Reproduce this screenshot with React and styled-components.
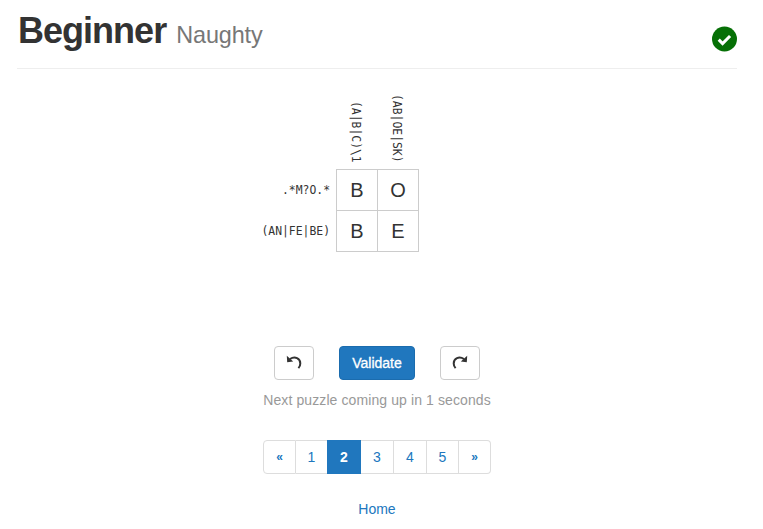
import React from "react";
import styled, { createGlobalStyle } from "styled-components";

const GlobalStyle = createGlobalStyle`
  * { box-sizing: border-box; }
  body {
    margin: 0;
    background: #fff;
    color: #333;
    font: 14px/20px "Liberation Sans", Arial, sans-serif;
    overflow: hidden;
  }
`;

const Page = styled.main`
  display: flex;
  flex-direction: column;
  align-items: center;
  width: 720px;
  height: 529px;
  margin-left: 17px;
`;

const Header = styled.header`
  display: flex;
  justify-content: space-between;
  align-items: flex-start;
  width: 100%;
  height: 69px;
  border-bottom: 1px solid #eee;
`;

const Title = styled.h1`
  display: flex;
  align-items: baseline;
  gap: 10px;
  margin: 11px 0 0 1px;
  font-size: 36px;
  line-height: 40px;
  font-weight: 700;
  letter-spacing: -0.98px;
`;

const Subtitle = styled.small`
  font-size: 23.4px;
  line-height: 1;
  font-weight: 400;
  letter-spacing: -0.1px;
  color: #777;
`;

const Solved = styled.svg`
  width: 25px;
  height: 26px;
  margin-top: 26px;
`;

const Board = styled.section`
  display: grid;
  grid-template-columns: 319px 41px 42px;
  grid-template-rows: 100px 41px 42px;
  width: 100%;
`;

const clueFont = `
  font-family: "DejaVu Sans Mono", monospace;
  font-size: 11.4px;
  white-space: pre;
`;

const Corner = styled.div`
  grid-row: 1;
  grid-column: 1;
`;

const RowClue = styled.div`
  ${clueFont}
  grid-column: 1;
  line-height: 42px;
  text-align: right;
  padding-right: 6px;
`;

const ColumnClue = styled.div`
  ${clueFont}
  display: flex;
  justify-content: flex-end;
  align-items: center;
  writing-mode: vertical-rl;
  line-height: 38px;
  padding-bottom: 6px;
  padding-right: 2px;
`;

const Cell = styled.div`
  display: flex;
  align-items: center;
  justify-content: center;
  font-size: 20px;
  border: solid #ccc;
  border-width: 1px ${(p) => (p.$last ? "1px" : "0")} ${(p) => (p.$bottom ? "1px" : "0")} 1px;
`;

const Controls = styled.div`
  display: flex;
  gap: 25px;
  margin-top: 94px;
`;

const Button = styled.button`
  display: flex;
  align-items: center;
  justify-content: center;
  width: ${(p) => (p.$primary ? "76px" : "40px")};
  height: 34px;
  padding: 0;
  border: 1px solid ${(p) => (p.$primary ? "#1b6cae" : "#ccc")};
  border-radius: 4px;
  background: ${(p) => (p.$primary ? "#2077be" : "#fff")};
  color: ${(p) => (p.$primary ? "#fff" : "#333")};
  font: 14px/20px "Liberation Sans", Arial, sans-serif;
  letter-spacing: 0;
  -webkit-text-stroke: ${(p) => (p.$primary ? "0.3px #fff" : "0")};
`;

const Arrow = styled.svg`
  width: 16px;
  height: 16px;
  transform: ${(p) => (p.$flip ? "scaleX(-1)" : "none")};
`;

const Notice = styled.p`
  margin: 10px 0 0;
  color: #999;
  letter-spacing: 0.1px;
  white-space: nowrap;
`;

const Pagination = styled.nav`
  display: flex;
  width: 228px;
  height: 34px;
  margin-top: 30px;
`;

const PageLink = styled.a`
  display: flex;
  align-items: center;
  justify-content: center;
  width: ${(p) => p.$width || 33}px;
  border: 1px solid ${(p) => (p.$active ? "#2077be" : "#ddd")};
  border-left-width: ${(p) => (p.$first || p.$active ? "1px" : "0")};
  border-right-width: ${(p) => (p.$beforeActive ? "0" : "1px")};
  border-radius: ${(p) => (p.$first ? "4px 0 0 4px" : p.$last ? "0 4px 4px 0" : "0")};
  background: ${(p) => (p.$active ? "#2077be" : "#fff")};
  color: ${(p) => (p.$active ? "#fff" : "#2077be")};
  font-size: ${(p) => (p.$first || p.$last ? "12px" : "14px")};
  font-weight: ${(p) => (p.$active || p.$first || p.$last ? 700 : 400)};
  text-decoration: none;
`;

const HomeLink = styled.a`
  margin-top: 25px;
  color: #2077be;
  text-decoration: none;
`;

function TurnArrow({ flip }) {
  return (
    <Arrow viewBox="0 0 16 16" $flip={flip}>
      <path d="M4 4C9 .8 14.3 3.5 14.3 8.4c0 1.9-.7 3.4-1.9 4.8" fill="none" stroke="#333" strokeWidth="2" />
      <path d="M.8 .8L1.2 7.2l6-.8z" fill="#333" />
    </Arrow>
  );
}

export default function App() {
  return (
    <>
      <GlobalStyle />
      <Page>
        <Header>
          <Title>Beginner <Subtitle>Naughty</Subtitle></Title>
          <Solved viewBox="0 0 26 26" aria-label="Solved">
            <circle cx="13" cy="13" r="13" fill="#067006" />
            <path d="M7 13.7l4 4 7.8-7.8" fill="none" stroke="#fff" strokeWidth="3.2" />
          </Solved>
        </Header>
        <Board>
          <Corner />
          <ColumnClue>{"(A|B|C)\\1"}</ColumnClue>
          <ColumnClue>(AB|OE|SK)</ColumnClue>
          <RowClue>.*M?O.*</RowClue>
          <Cell>B</Cell>
          <Cell $last>O</Cell>
          <RowClue>(AN|FE|BE)</RowClue>
          <Cell $bottom>B</Cell>
          <Cell $bottom $last>E</Cell>
        </Board>
        <Controls>
          <Button aria-label="Undo"><TurnArrow /></Button>
          <Button $primary>Validate</Button>
          <Button aria-label="Redo"><TurnArrow flip /></Button>
        </Controls>
        <Notice>Next puzzle coming up in 1 seconds</Notice>
        <Pagination>
          <PageLink $first>«</PageLink>
          <PageLink $beforeActive $width={31}>1</PageLink>
          <PageLink $active $width={34}>2</PageLink>
          <PageLink>3</PageLink>
          <PageLink>4</PageLink>
          <PageLink $width={32}>5</PageLink>
          <PageLink $last $width={32}>»</PageLink>
        </Pagination>
        <HomeLink>Home</HomeLink>
      </Page>
    </>
  );
}
